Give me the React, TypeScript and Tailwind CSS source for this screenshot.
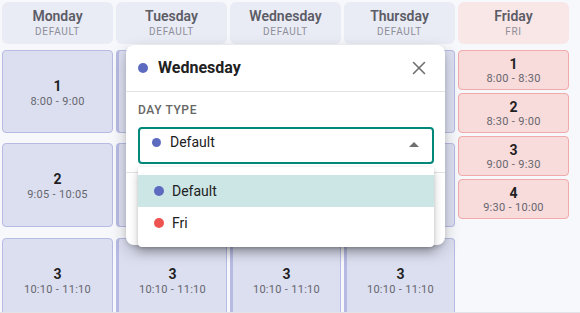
import { X } from "lucide-react"

type Slot = { n: number; time: string; h: string; mt: string }

const normalSlots: Slot[] = [
  { n: 1, time: "8:00 - 9:00", h: "h-[83px]", mt: "mt-0" },
  { n: 2, time: "9:05 - 10:05", h: "h-[84px]", mt: "mt-[10px]" },
  { n: 3, time: "10:10 - 11:10", h: "h-[84px]", mt: "mt-[11px]" },
]

const friSlots = [
  { n: 1, time: "8:00 - 8:30" },
  { n: 2, time: "8:30 - 9:00" },
  { n: 3, time: "9:00 - 9:30" },
  { n: 4, time: "9:30 - 10:00" },
]

const days = [
  { name: "Monday", type: "DEFAULT", thick: false },
  { name: "Tuesday", type: "DEFAULT", thick: true },
  { name: "Wednesday", type: "DEFAULT", thick: true },
  { name: "Thursday", type: "DEFAULT", thick: true },
]

const Header = ({ name, type, fri }: { name: string; type: string; fri?: boolean }) => (
  <div
    className={`h-[42px] rounded-md flex flex-col items-center justify-center ${fri ? "bg-[#f9e7e7]" : "bg-[#e9ebf5]"}`}
  >
    <span className="text-[14px] leading-[17px] font-semibold text-[#5c5c66]">{name}</span>
    <span className="text-[10px] leading-[12px] tracking-[0.7px] text-[#8e8e98] mt-[1px]">{type}</span>
  </div>
)

const Dot = ({ color, size = "w-[10px] h-[10px]" }: { color: string; size?: string }) => (
  <span className={`${size} rounded-full inline-block shrink-0 ${color}`} />
)

export default function App() {
  return (
    <div
      className="relative w-[580px] h-[313px] overflow-hidden bg-[#f7f8fb] border-b border-[#e2e3e8]"
      style={{ fontFamily: "Roboto, 'Liberation Sans', sans-serif" }}
    >
      <div className="flex gap-[3px] pl-[2px] pt-[2px]">
        {days.map((d) => (
          <div key={d.name} className="w-[111px] flex flex-col shrink-0">
            <Header name={d.name} type={d.type} />
            <div className="flex flex-col mt-[6px]">
              {normalSlots.map((s) => (
                <div
                  key={s.n}
                  className={`${s.h} ${s.mt} shrink-0 rounded-[4px] bg-[#dcdff0] border border-[#b7bbe3] ${d.thick ? "border-l-[3px]" : ""} flex flex-col items-center justify-center pt-[3px]`}
                >
                  <span className="text-[14px] leading-[16px] font-bold text-[#1f1f24]">{s.n}</span>
                  <span className="text-[11px] leading-[14px] text-[#66666e] tracking-[0.3px] mt-[1px]">{s.time}</span>
                </div>
              ))}
            </div>
          </div>
        ))}
        <div className="w-[111px] flex flex-col shrink-0">
          <Header name="Friday" type="FRI" fri />
          <div className="flex flex-col gap-[3px] mt-[6px]">
            {friSlots.map((s) => (
              <div
                key={s.n}
                className="h-[40px] rounded-[4px] bg-[#f8dbdb] border border-[#f1a9a9] flex flex-col items-center justify-center pt-[2px]"
              >
                <span className="text-[14px] leading-[16px] font-bold text-[#1f1f24]">{s.n}</span>
                <span className="text-[11px] leading-[14px] text-[#66666e] tracking-[0.3px]">{s.time}</span>
              </div>
            ))}
          </div>
        </div>
      </div>

      {/* popover */}
      <div className="absolute left-[126px] top-[45px] w-[319px] h-[200px] bg-white rounded-lg shadow-[0_6px_16px_rgba(0,0,0,0.22),0_2px_4px_rgba(0,0,0,0.12)]">
        <div className="h-[47px] flex items-center pl-[12px] pr-[15px] border-b border-[#e3e3e3]">
          <Dot color="bg-[#5c6bc0]" />
          <span className="ml-[10px] text-[16px] font-bold text-[#212121]">Wednesday</span>
          <X className="ml-auto text-[#6f6f6f]" size={22} strokeWidth={1.7} />
        </div>
        <div className="px-[12px] pt-[11px]">
          <div className="text-[12px] leading-[14px] font-medium tracking-[0.6px] text-[#666]">DAY TYPE</div>
          <div className="mt-[10px] h-[37px] rounded-[4px] border-2 border-[#00897b] flex items-start pt-[4px] pl-[12px] pr-[13px] mr-[-1px]">
            <Dot color="bg-[#5c6bc0]" size="w-[9px] h-[9px] mt-[5px]" />
            <span className="ml-[9px] text-[14px] leading-[18px] text-[#212121]">Default</span>
            <svg className="ml-auto mt-[9px]" width="10" height="5" viewBox="0 0 10 5">
              <path d="M0 5 L5 0 L10 5 Z" fill="#6f6f6f" />
            </svg>
          </div>
        </div>
        <div className="mt-[8px] border-t border-[#e3e3e3]" />
      </div>

      {/* select menu */}
      <div className="absolute left-[138px] top-[167px] w-[296px] bg-white rounded-b-[4px] py-[8px] shadow-[0_5px_10px_rgba(0,0,0,0.22),0_1px_3px_rgba(0,0,0,0.12)]">
        <div className="h-[32px] flex items-center pl-[16px] bg-[#cce6e5]">
          <Dot color="bg-[#5c6bc0]" />
          <span className="ml-[8px] text-[14px] text-[#212121]">Default</span>
        </div>
        <div className="h-[32px] flex items-center pl-[16px]">
          <Dot color="bg-[#ef5350]" />
          <span className="ml-[8px] text-[14px] text-[#212121]">Fri</span>
        </div>
      </div>
    </div>
  )
}
